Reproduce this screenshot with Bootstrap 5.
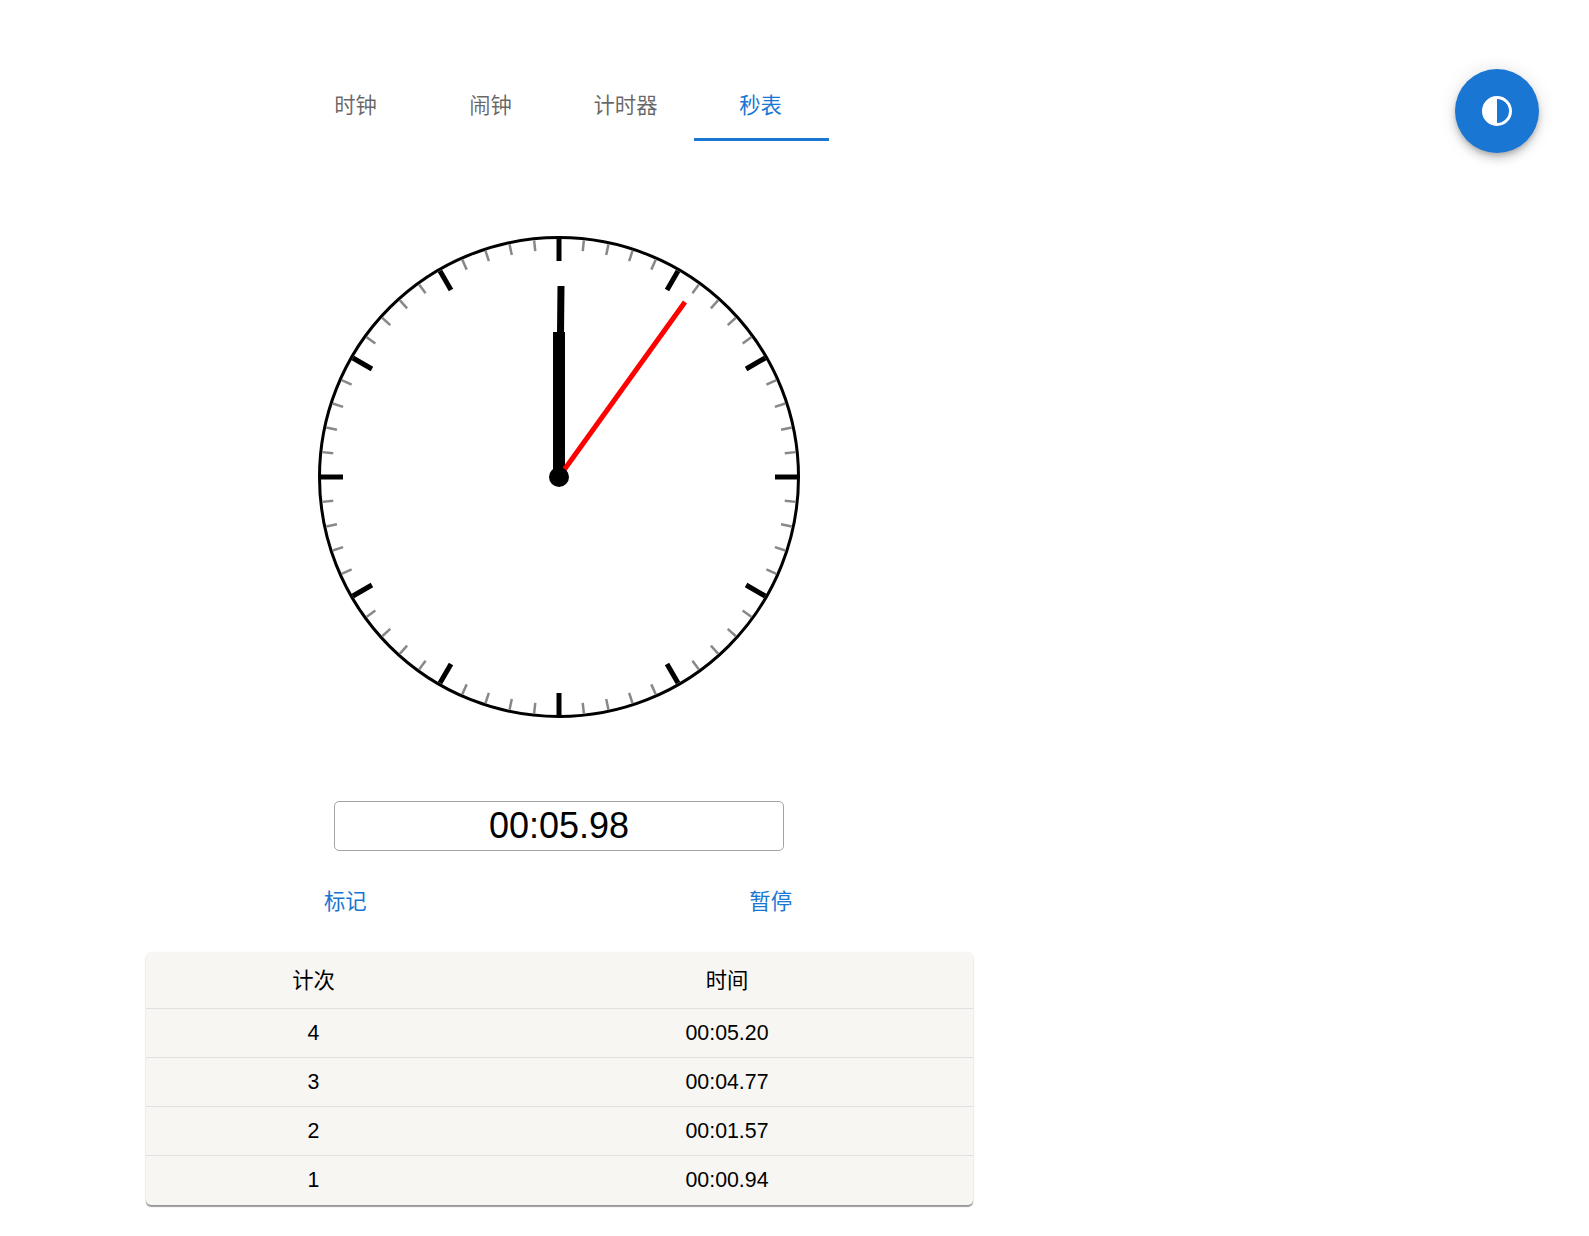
<!DOCTYPE html>
<html lang="zh-CN">
<head>
<meta charset="utf-8">
<title>秒表</title>
<link href="https://cdn.jsdelivr.net/npm/bootstrap@5.3.0/dist/css/bootstrap.min.css" rel="stylesheet">
<style>
body { font-family: "Liberation Sans", "Noto Sans CJK SC", sans-serif; background: #fff; color: #000; font-size: 21.33px; }
.stage { width: 826px; margin-left: 146px; padding-top: 93px; padding-bottom: 20px; }
.tabbar .nav-link { width: 135px; height: 48px; padding: 1px 2px 0 0; font-size: 21.33px; line-height: 24px; color: rgba(0,0,0,.6); display: flex; align-items: flex-start; justify-content: center; border-bottom: 3px solid transparent; }
.tabbar .nav-link.active { color: #1976d2; border-bottom-color: #1976d2; }
.dial { display: block; width: 480px; height: 480px; margin: 96px auto 0; overflow: visible; }
.readout { width: 450px; height: 50px; margin: 84px auto 0; border: 1px solid #a3a3a3; border-radius: 5px; font-size: 36px; line-height: 48px; text-align: center; }
.actions { width: 484px; margin: 32px 0 0 170px; }
.actions .btn { color: #1976d2; font-size: 21.33px; line-height: 26px; padding: 6px 8px; border: 0; }
.lapwrap { margin-top: 32px; margin-right: -1px; background: #f7f6f3; border-radius: 5px; box-shadow: 0 2px 1px 0 rgba(0,0,0,.38), 0 0 3px 0 rgba(0,0,0,.1); overflow: hidden; }
.laps { --bs-table-bg: transparent; --bs-table-color: #000; --bs-table-border-color: #e0e0e0; color: #000; margin: 0; table-layout: fixed; text-align: center; font-size: 21.33px; }
.laps th, .laps td { vertical-align: middle; font-weight: 400; }
.laps thead th { height: 55px; padding: 4px 0 0; }
.laps tbody td { height: 49px; padding: 2px 0 0; }
.laps tbody tr:last-child td { border-bottom: 0; height: 50px; }
.col-lap { width: 335px; }
.fab { position: fixed; left: 1455px; top: 69px; width: 84px; height: 84px; border-radius: 50%; background: #1976d2; border: 0; padding: 0; box-shadow: 0 3px 5px -1px rgba(0,0,0,.2), 0 6px 10px 0 rgba(0,0,0,.14), 0 1px 18px 0 rgba(0,0,0,.12); }
</style>
</head>
<body>
<main class="stage">
  <ul class="nav justify-content-center tabbar">
    <li class="nav-item"><a class="nav-link" href="#">时钟</a></li>
    <li class="nav-item"><a class="nav-link" href="#">闹钟</a></li>
    <li class="nav-item"><a class="nav-link" href="#">计时器</a></li>
    <li class="nav-item"><a class="nav-link active" href="#">秒表</a></li>
  </ul>
  <svg class="dial" viewBox="0 0 480 480" id="dial" aria-label="clock">
    <circle cx="240" cy="240" r="239.500" fill="#fff" stroke="#000" stroke-width="3"/>
    <g id="ticks"></g>
    <line x1="240" y1="240" x2="240" y2="95" stroke="#000" stroke-width="12"/>
    <line x1="240" y1="240" x2="242" y2="49" stroke="#000" stroke-width="7"/>
    <line x1="240" y1="240" x2="366" y2="65" stroke="#f00" stroke-width="5"/>
    <circle cx="240" cy="240" r="10" fill="#000"/>
  </svg>
  <div class="readout">00:05.98</div>
  <div class="actions d-flex justify-content-between">
    <button type="button" class="btn">标记</button>
    <button type="button" class="btn">暂停</button>
  </div>
  <div class="lapwrap">
    <table class="table laps">
      <colgroup><col class="col-lap"><col></colgroup>
      <thead><tr><th>计次</th><th>时间</th></tr></thead>
      <tbody>
        <tr><td>4</td><td>00:05.20</td></tr>
        <tr><td>3</td><td>00:04.77</td></tr>
        <tr><td>2</td><td>00:01.57</td></tr>
        <tr><td>1</td><td>00:00.94</td></tr>
      </tbody>
    </table>
  </div>
</main>
<button type="button" class="fab" aria-label="主题">
  <svg width="32" height="32" viewBox="0 0 32 32" class="d-block mx-auto">
    <circle cx="16" cy="16" r="13.5" fill="none" stroke="#fff" stroke-width="3"/>
    <path d="M16 1.5a14.500 14.500 0 0 0 0 29z" fill="#fff"/>
  </svg>
</button>
<script>
var g = document.getElementById('ticks'), s = '';
for (var i = 0; i < 60; i++) {
  var a = i * Math.PI / 30, major = i % 5 === 0;
  var r1 = 238, r2 = major ? 216 : 227;
  var sn = Math.sin(a), cs = Math.cos(a);
  s += '<line x1="' + (240 + r1 * sn).toFixed(2) + '" y1="' + (240 - r1 * cs).toFixed(2) + '" x2="' + (240 + r2 * sn).toFixed(2) + '" y2="' + (240 - r2 * cs).toFixed(2) + '" stroke="' + (major ? '#000' : '#888') + '" stroke-width="' + (major ? 5 : 2.5) + '"/>';
}
g.innerHTML = s;
</script>
<script src="https://cdn.jsdelivr.net/npm/bootstrap@5.3.0/dist/js/bootstrap.bundle.min.js"></script>
</body>
</html>
